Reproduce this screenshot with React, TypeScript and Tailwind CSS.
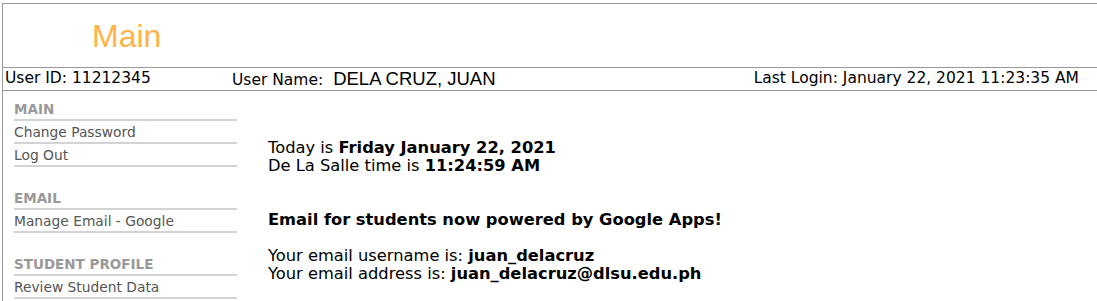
import React from 'react';

const tahoma = '[font-family:"DejaVu_Sans",Verdana,sans-serif]';

type Section = { title: string; items: string[] };

const sections: Section[] = [
  { title: 'MAIN', items: ['Change Password', 'Log Out'] },
  { title: 'EMAIL', items: ['Manage Email - Google'] },
  { title: 'STUDENT PROFILE', items: ['Review Student Data'] },
];

function SideSection({ section }: { section: Section }) {
  return (
    <div className="mb-[20px]">
      <div className="h-[23px] border-b-2 border-[#d3d3d3] pt-[2px] text-[13.5px] leading-[18px] font-bold text-[#999999]">
        {section.title}
      </div>
      {section.items.map((item) => (
        <div
          key={item}
          className="h-[23px] border-b-2 border-[#d3d3d3] pt-[2px] text-[13.8px] leading-[18px] text-[#555555]"
        >
          {item}
        </div>
      ))}
    </div>
  );
}

export default function App() {
  return (
    <div className={`h-[301px] overflow-hidden bg-white pt-[3px] pl-[2px] ${tahoma}`}>
      <div className="border-t border-l border-[#999999]">
        <div className="h-[63px] pl-[89px] pt-[14px]">
          <span className="text-[32px] leading-[36px] text-[#ffb347] [font-family:'Liberation_Sans',Arial,sans-serif]">
            Main
          </span>
        </div>
        <div className="flex h-[24px] items-center border-y border-[#999999] pl-[2px] pr-[18px] text-[15.5px] text-black">
          <div className="w-[227px]">User ID: 11212345</div>
          <div className="flex-1">
            User Name:{' '}
            <span className="ml-[5px] [font-family:'Liberation_Sans',Arial,sans-serif] text-[18.5px]">
              DELA CRUZ, JUAN
            </span>
          </div>
          <div>Last Login: January 22, 2021 11:23:35 AM</div>
        </div>
        <div className="flex">
          <aside className="ml-[11px] w-[223px] pt-[7px]">
            {sections.map((s) => (
              <SideSection key={s.title} section={s} />
            ))}
          </aside>
          <main className="ml-[31px] pt-[48px] text-[16.3px] leading-[18px] text-black">
            <div>
              Today is <b>Friday January 22, 2021</b>
            </div>
            <div>
              De La Salle time is <b>11:24:59 AM</b>
            </div>
            <div className="mt-[36px] font-bold">Email for students now powered by Google Apps!</div>
            <div className="mt-[18px]">
              Your email username is: <b>juan_delacruz</b>
            </div>
            <div>
              Your email address is: <b>juan_delacruz@dlsu.edu.ph</b>
            </div>
          </main>
        </div>
      </div>
    </div>
  );
}
